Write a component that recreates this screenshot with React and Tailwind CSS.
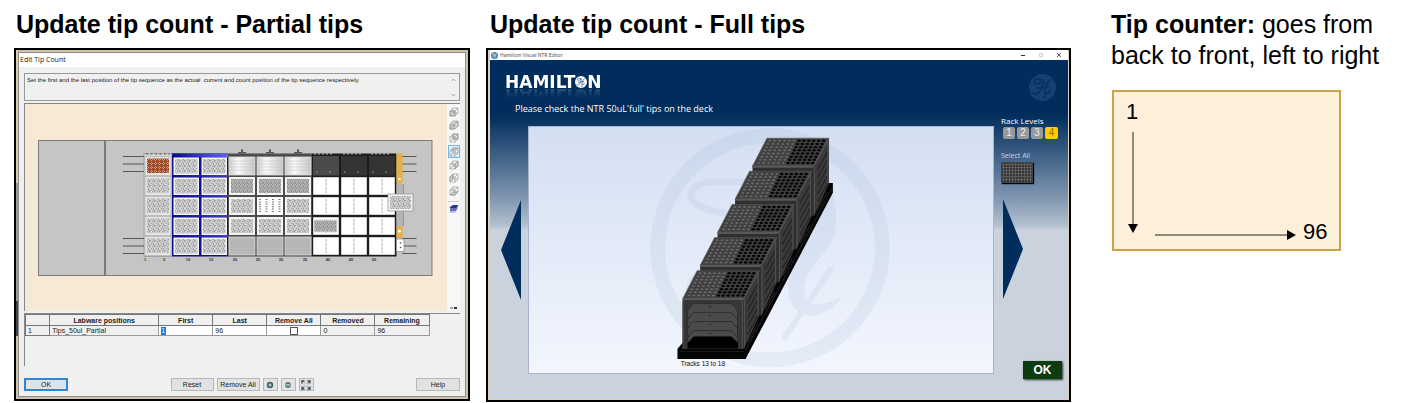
import React from "react";

const COLS = [144, 172, 200, 228, 256, 284, 312, 340, 368];
const ROWS = [156, 176, 196, 216, 236];

function Cell({ c, r }) {
  const x = COLS[c];
  const y = ROWS[r];
  if (c === 0) {
    return (
      <g>
        <rect x={x + 1} y={y + 0.5} width="26" height="19" fill="#e4e4e4" stroke="#aaa" strokeWidth="0.6" />
        <rect x={x + 3} y={y + 2.5} width="22" height="14.5" fill={r === 0 ? "url(#brown)" : "url(#tex)"} />
      </g>
    );
  }
  if (c < 3) {
    return (
      <g>
        <rect x={x + 1.5} y={y + 1.5} width="25.5" height="17.5" fill="#f4f4f4" />
        <rect x={x + 3} y={y + 3} width="22.5" height="14.5" fill="url(#tex)" />
      </g>
    );
  }
  if (c < 6) {
    if (r === 0 || r === 4) {
      return (
        <g>
          <rect x={x + 1} y={y + 1} width="26" height="18" fill={r === 0 ? "url(#shine)" : "#b9b9b9"} stroke="#ddd" strokeWidth="0.8" />
          {[5, 8, 11, 14].map((d) => (
            <path key={d} d={`M${x + 2} ${y + d}h24`} stroke="#999" strokeWidth="0.5" opacity="0.5" />
          ))}
        </g>
      );
    }
    if (r === 2 && c === 4) {
      return (
        <g>
          <rect x={x + 1} y={y + 1} width="26" height="18" fill="#fff" />
          {[4, 10.5, 17, 23.5].map((d) => (
            <path key={d} d={`M${x + d} ${y + 3}v14`} stroke="#777" strokeWidth="2" strokeDasharray="1 1.4" />
          ))}
        </g>
      );
    }
    return (
      <g>
        <rect x={x + 1} y={y + 1} width="26" height="18" fill="#f2f2f2" />
        <rect x={x + 3} y={y + 3} width="22" height="14" fill={r === 1 ? "url(#texDark)" : "url(#tex)"} />
      </g>
    );
  }
  if (r === 0) {
    return (
      <g>
        <rect x={x + 1} y={y} width="26" height="19.5" fill={c === 6 ? "#4a4a4a" : "#343434"} />
        <circle cx={x + 5} cy={y + 16} r="0.7" fill="#aaa" />
        <circle cx={x + 18} cy={y + 16} r="0.7" fill="#aaa" />
      </g>
    );
  }
  return (
    <g>
      <rect x={x + 1.2} y={y + 1.2} width="25.6" height="17.6" fill="#fff" />
      <path d={`M${x + 14} ${y + 3}v14`} stroke="#999" strokeWidth="0.8" strokeDasharray="3 1" />
      {r === 3 && c === 6 && <rect x={x + 2} y={y + 4} width="23" height="12" fill="url(#texDark)" stroke="#ddd" />}
    </g>
  );
}

function Deck() {
  return (
    <svg viewBox="25 104 422 207" className="block h-auto w-full" role="img" aria-label="Deck layout">
      <defs>
        <pattern id="tex" width="5" height="5" patternUnits="userSpaceOnUse">
          <rect width="5" height="5" fill="#c8c8c8" />
          <path d="M0 0h1v1H0zM2 1h1v1H2zM4 0h1v2H4zM1 3h1v1H1zM3 3h1v2H3z" fill="#a2a2a2" />
          <path d="M1 1h1v1H1zM0 4h1v1H0zM4 3h1v1H4z" fill="#dedede" />
        </pattern>
        <pattern id="texDark" width="4" height="4" patternUnits="userSpaceOnUse">
          <rect width="4" height="4" fill="#b0b0b0" />
          <path d="M0 0h1v1H0zM2 1h1v1H2zM1 3h1v1H1zM3 2h1v2H3z" fill="#929292" />
        </pattern>
        <pattern id="brown" width="4" height="4" patternUnits="userSpaceOnUse">
          <rect width="4" height="4" fill="#a04c28" />
          <path d="M0 3h1v1H0zM3 0h1v1H3zM2 3h1v1H2zM3 2h1v1H3z" fill="#cc9880" />
        </pattern>
        <linearGradient id="shine" x1="0" x2="1">
          <stop offset="0" stopColor="#cfcfcf" />
          <stop offset="0.35" stopColor="#f8f8f8" />
          <stop offset="1" stopColor="#c8c8c8" />
        </linearGradient>
        <linearGradient id="blue" x1="0" x2="1">
          <stop offset="0" stopColor="#0c0c84" />
          <stop offset="1" stopColor="#6464f0" />
        </linearGradient>
      </defs>
      <rect x="25" y="104" width="422" height="207" fill="#f6ead7" />
      <rect x="38.5" y="140.5" width="393.5" height="135" fill="#c5c5c5" stroke="#7c7c7c" />
      <path d="M105 141v134" stroke="#666" strokeWidth="1.6" />
      <path
        d="M123 156.5h21M123 164h21M123 171.5h21M123 238.500h21M123 246h21M123 253.500h21M402 156.500h14.500M402 164h14.500M402 171.500h14.500M402 238.500h14.500M402 246h14.500M402 253.500h14.500"
        stroke="#555"
        strokeWidth="1.1"
      />
      <rect x="144" y="153.500" width="28" height="103" fill="#d6d6d6" stroke="#888" strokeWidth="0.6" />
      <path d="M146 154h24" stroke="#555" strokeDasharray="2 2.500" />
      <rect x="172" y="153.500" width="56" height="103" fill="#12128e" />
      <rect x="172" y="153.500" width="56" height="4" fill="url(#blue)" />
      {[176, 196, 216, 236].map((y) => (
        <rect key={y} x="174" y={y - 0.8} width="54" height="1.500" fill="url(#blue)" opacity="0.7" />
      ))}
      <rect x="228" y="153.500" width="84" height="103" fill="#4c4c4c" />
      <rect x="312" y="153.500" width="84.500" height="103" fill="#1c1c1c" />
      {[242, 270, 298].map((x) => (
        <path key={x} d={`M${x - 4} 153.500v-1.500h3v-2.500h2v2.500h3v1.500z`} fill="#555" />
      ))}
      <path d="M314 154h19M343 154h19M371 154h19" stroke="#bbb" strokeWidth="1.200" strokeDasharray="2 2" />
      {COLS.map((x, c) => ROWS.map((y, r) => <Cell key={`${x}-${y}`} c={c} r={r} />))}
      <path d="M396.500 153.500h6v28l-2 2.500-4-1zM396.500 226h6v12h-6z" fill="#e6b044" />
      <circle cx="399.500" cy="179" r="1.200" fill="#fff" />
      <circle cx="399.500" cy="231" r="1.500" fill="#fff" />
      <path d="M396.500 184h6v42h-6" fill="#b4b4b4" />
      <path d="M403.300 184v42" stroke="#8c8c8c" />
      <rect x="396.500" y="239" width="7.500" height="12.500" fill="#fff" stroke="#888" strokeWidth="0.7" />
      <circle cx="400.500" cy="243" r="0.8" fill="#444" />
      <circle cx="400.500" cy="247.500" r="0.8" fill="#444" />
      <rect x="388" y="194" width="25" height="17" fill="#f2f2f2" stroke="#999" strokeWidth="0.8" />
      <rect x="390" y="196" width="21" height="13" fill="url(#tex)" />
      {[["1", 145], ["5", 164], ["10", 188], ["15", 211], ["20", 235], ["25", 258], ["30", 281], ["35", 305], ["40", 328], ["45", 351], ["50", 374]].map(([t, x]) => (
        <text key={t} x={x} y="260.500" fontSize="4" fontWeight="700" fill="#333" textAnchor="middle" fontFamily="Liberation Sans, sans-serif">
          {t}
        </text>
      ))}
    </svg>
  );
}

function ViewIcon({ n }) {
  const faces = ["M1 4h5v5H1z", "M1 5h4v4H1zM5 2h4v4", "M4 1h5v5H4z", "M2 2.500h5M4 1h5", "M6 4l3-3v5L6 9z", "M1 4l3-3v5L1 9z", "M1 9l3-3h5L6 9z"];
  return (
    <svg viewBox="0 0 10 10" className="size-[10px]" fill="none" stroke="#999" strokeWidth="0.7">
      <path d={faces[n]} fill="#dcdcdc" />
      <path d="M1 4h5v5H1zM4 1h5v5H4zM1 4l3-3M6 4l3-3M6 9l3-3M1 9l3-3" />
    </svg>
  );
}

const VIEWS = ["Front", "Back", "Side", "Top", "Right", "Left", "Bottom"];

const smallButton = "flex h-[13px] items-center justify-center border border-[#b8b8b8] bg-[#e2e2e2] text-[7px] leading-[8px]";
const headCell = "border border-[#777] p-0 text-center font-bold";
const cell = "border border-[#999] px-[2px] py-0 text-left font-normal";

function PartialDialog() {
  return (
    <div className="border-2 border-black bg-[#cfc4ad] bg-[linear-gradient(#d8ccb0_0,#d8ccb0_38%,#999_38%,#999_72%,#444_72%,#444_82%,#cfc4ad_82%)] bg-[length:2px_100%] bg-no-repeat p-[2px]">
      <div className="border border-[#8c8c8c] bg-[#f0f0f0] font-['Liberation_Sans',Arial,sans-serif] text-[#222]">
        <div className="h-[14px] bg-white px-px font-['Open_Sans',sans-serif] text-[7px] leading-[13px]">Edit Tip Count</div>
        <div className="px-[5px] pt-[6px] pb-[5px]">
          <div className="flex h-7 border border-[#999] pr-px">
            <textarea
              readOnly
              aria-label="Instruction"
              className="block h-full flex-1 resize-none overflow-hidden px-[2px] text-[6px] leading-[12px] outline-none"
              defaultValue="Set the first and the last position of the tip sequence as the actual  current and count position of the tip sequence respectively."
            />
            <svg viewBox="0 0 9 26" className="h-[26px] w-[9px]" fill="none" stroke="#aaa">
              <path d="M2.500 7l2-2 2 2M2.500 20l2 2 2-2" />
            </svg>
          </div>
          <div className="mt-[2px] flex border-t border-l border-[#888]">
            <div className="min-w-0 flex-1">
              <Deck />
            </div>
            <div className="flex w-[13px] flex-col items-center bg-[#f7f7f7] pt-[2px]">
              {VIEWS.map((v, i) => (
                <button
                  key={v}
                  type="button"
                  aria-label={v}
                  className={
                    i === 3
                      ? "mb-px flex h-[13px] w-[12px] items-center justify-center border border-[#7ab4e4] bg-[#e4f1fb]"
                      : "mb-px flex h-[12px] w-[12px] items-center justify-center"
                  }
                >
                  <ViewIcon n={i} />
                </button>
              ))}
              <span className="mt-[3px] h-px w-[11px] bg-[#ccc]" />
              <button type="button" aria-label="Layers" className="mt-[2px]">
                <svg viewBox="0 0 10 10" className="size-[10px]">
                  <path d="M1 6l3-2h5l-3 5H1z" fill="#b9bede" />
                  <path d="M1 4.500l3-2h5L7 7H1z" fill="#6470b8" />
                  <path d="M1 3l3-2h5.500L7 4H1z" fill="#27338f" />
                </svg>
              </button>
              <svg viewBox="0 0 8 4" className="mt-auto mb-px h-1 w-2">
                <path d="M0 1h3v2H0z" fill="#aaa" />
                <path d="M4 1h3v2H4z" fill="#333" />
              </svg>
            </div>
          </div>
          <div className="mt-[2px] h-[53px] border-t border-l border-[#888]">
            <table className="w-[93%] table-fixed border-collapse bg-white text-[7px] leading-[9px]">
              <colgroup>
                <col className="w-[6%]" />
                <col className="w-[27%]" />
                <col />
                <col />
                <col />
                <col />
                <col />
              </colgroup>
              <thead className="bg-[#f0f0f0]">
                <tr className="h-[11px]">
                  <th className={headCell} />
                  {["Labware positions", "First", "Last", "Remove All", "Removed", "Remaining"].map((h) => (
                    <th key={h} className={headCell}>
                      {h}
                    </th>
                  ))}
                </tr>
              </thead>
              <tbody>
                <tr className="h-[10px]">
                  <th className="border border-[#777] bg-[#f0f0f0] px-[2px] py-0 text-left font-normal">1</th>
                  <td className="border border-[#999] bg-[#f0f0f0] px-[2px] py-0">Tips_50ul_Partial</td>
                  <td className={cell}>
                    <input aria-label="First" defaultValue="1" className="block h-[8px] w-[5px] bg-[#1a78d8] text-[7px] leading-[8px] text-white outline-none" />
                  </td>
                  <td className={cell}>96</td>
                  <td className={cell}>
                    <input type="checkbox" aria-label="Remove All" className="mx-auto block size-[8px] appearance-none border border-[#555] bg-white" />
                  </td>
                  <td className="border border-[#999] bg-[#f0f0f0] px-[2px] py-0">0</td>
                  <td className="border border-[#999] bg-[#f0f0f0] px-[2px] py-0">96</td>
                </tr>
              </tbody>
            </table>
          </div>
          <div className="mt-3 flex justify-between">
            <button type="button" className="flex h-[13px] w-[44px] items-center justify-center border-2 border-[#2f86d6] bg-[#e2e2e2] text-[7px] leading-[8px]">
              OK
            </button>
            <div className="flex gap-[3px]">
              <button type="button" className={smallButton + " w-[43px]"}>
                Reset
              </button>
              <button type="button" className={smallButton + " w-[43px]"}>
                Remove All
              </button>
              <button type="button" aria-label="Zoom in" className={smallButton + " w-[15px]"}>
                <svg viewBox="0 0 8 8" className="size-2">
                  <circle cx="4" cy="4" r="3.200" fill="#47606e" />
                  <path d="M2.500 4h3M4 2.500v3" stroke="#dfeaf0" />
                </svg>
              </button>
              <button type="button" aria-label="Zoom out" className={smallButton + " w-[15px]"}>
                <svg viewBox="0 0 8 8" className="size-2">
                  <circle cx="4" cy="4" r="3" fill="#5d7480" />
                  <path d="M1.500 4h5" stroke="#e8f0f4" />
                </svg>
              </button>
              <button type="button" aria-label="Fit to view" className={smallButton + " w-[15px]"}>
                <svg viewBox="0 0 10 10" className="size-[10px]" fill="none" stroke="#33444e" strokeWidth="1.300">
                  <path d="M1 3.500V1h2.500M6.500 1H9v2.500M9 6.500V9H6.500M3.500 9H1V6.500" />
                  <path d="M1.500 8.500L3.500 6.500M6.500 3.500l2-2M6.500 6.500l2 2" strokeWidth="0.9" />
                  <path d="M3 3h4v4H3z" stroke="#9fb4c0" strokeWidth="0.6" />
                </svg>
              </button>
            </div>
            <button type="button" className={smallButton + " w-[44px]"}>
              Help
            </button>
          </div>
        </div>
      </div>
    </div>
  );
}

function Holes() {
  const out = [];
  for (let r = 0; r < 8; r++) {
    for (let c = 0; c < 12; c++) {
      const v = (r + 0.5) / 8;
      const x = 698.5 - v * 12.5 + ((c + 0.5) / 12) * 59;
      const y = 272 + v * 25.5;
      out.push(
        <ellipse key={`${r}-${c}`} cx={x} cy={y} rx="1.8" ry="1.250" fill={c < 6 ? "#6c6c6c" : "#060606"} stroke={c < 6 ? "#2a2a2a" : "none"} strokeWidth="0.4" />
      );
    }
  }
  return out;
}

function Rack({ i }) {
  return (
    <g transform={`translate(${i * 17.5} ${i * -33.2})`}>
      <path d="M683 299h61l15.500-28v45.500L744 349h-61z" fill="#2f2f2f" />
      <path d="M744 299l15.500-28v45.500L744 350z" fill="#3a3a3a" />
      <path d="M748 303l10-18M748 311l10-18M748 319l10-18M748 327l10-18M748 335l10-18M748 343l10-18" stroke="#242424" strokeWidth="1.200" />
      <path d="M744 299l15.500-28" stroke="#666" strokeWidth="1.200" />
      <path d="M697.500 271h62L744 299h-61z" fill="#424242" stroke="#585858" strokeWidth="0.6" />
      <Holes />
      <path d="M683 299.500h61" stroke="#585858" strokeWidth="2.200" />
      <path d="M745 300v48M758.500 274v42" stroke="#555" strokeWidth="0.9" />
    </g>
  );
}

function RackView() {
  return (
    <svg viewBox="529 127 465 247" className="block h-auto w-full" role="img" aria-label="Tip racks on tracks 13 to 18">
      <defs>
        <linearGradient id="sky" x1="0" x2="0" y1="0" y2="1">
          <stop offset="0" stopColor="#d3dff2" />
          <stop offset="1" stopColor="#f3f6fe" />
        </linearGradient>
      </defs>
      <rect x="529" y="127" width="465" height="247" fill="url(#sky)" />
      <g fill="none" stroke="#90accb" opacity="0.13">
        <circle cx="770.500" cy="248" r="112.500" strokeWidth="15" />
        <path d="M760 182h-44c-20 0-30 10-22 20 10 11 40 12 58 14" strokeWidth="7" />
        <path d="M720 274c-20-2-30 4-30 16" strokeWidth="7" />
        <path d="M831 270L785 338" strokeWidth="6" strokeLinecap="round" />
        <path
          d="M826 178c14 28 15 54 1 72-10 13-22 24-22 40 0 10 4 15 10 15 10 0 20-4 28-9-8 14-24 22-36 20-14-3-20-18-18-36 3-24 20-38 28-54 6-14 10-30 9-48z"
          fill="#90accb"
          stroke="none"
        />
      </g>
      <path d="M678 349L825 183h8.500v10L746 359.500h-68z" fill="#040404" />
      <path d="M746 351l87-163" stroke="#2c2c2c" strokeWidth="0.8" />
      {[4, 3, 2, 1, 0].map((i) => (
        <Rack key={i} i={i} />
      ))}
      <path d="M683 301h61v49h-61z" fill="#363636" />
      {[0, 1, 2, 3].map((k) => (
        <g key={k}>
          <path d={`M688 ${311 + k * 9}l5.500-7h38.500l6 7v7.500h-50z`} fill="#4a4a4a" stroke="#262626" strokeWidth="0.7" />
          <circle cx="710.500" cy={307 + k * 9} r="0.8" fill="#1a1a1a" />
        </g>
      ))}
      <path d="M688 343.500l6-6.500h38l6.500 6.500v5.500H688z" fill="#000" />
      <path d="M683.500 301v48M743 301v48" stroke="#505050" />
      <path d="M678 349.500h68v10h-68z" fill="#050505" />
      <path d="M680 352h65" stroke="#262626" strokeWidth="0.700" />
      <text x="681" y="367" fontSize="6.5" fill="#111" fontFamily="Liberation Sans, Arial, sans-serif">
        Tracks 13 to 18
      </text>
    </svg>
  );
}

function ScriptMark({ className, disc, ink }) {
  return (
    <svg viewBox="0 0 26 26" className={className} aria-hidden="true">
      <circle cx="13" cy="13" r="13" fill={disc} />
      <path
        d="M4 18.500c2.500 2 5.500.5 7-3l3.500-8.500M13 5.500C8 4 4.500 5.500 5 8s4.500 1.500 7-.5M21.500 5c-3 .5-4 4-5.500 8-1.300 3.500-1.500 6.500.8 6 1.500-.4 2.700-1.800 3.200-3M7 13.500c4.500 0 8-.5 12-1.500M15.500 19l-1 4"
        fill="none"
        stroke={ink}
        strokeWidth="1.500"
        strokeLinecap="round"
      />
    </svg>
  );
}

function FullDialog() {
  return (
    <div className="flex flex-col border-2 border-black bg-[#ddd2b8] pr-px pb-px pl-[2px]">
      <div className="flex h-[10px] items-center bg-white pl-px font-['Open_Sans',sans-serif] text-[5px] leading-[10px] text-[#444]">
        <ScriptMark className="mr-[2px] size-[7px]" disc="#4479ad" ink="#fff" />
        <span className="flex-1">Hamilton Visual NTR Editor</span>
        <div className="flex gap-[10px] pr-[5px]">
          <button type="button" aria-label="Minimize">
            <svg viewBox="0 0 8 8" className="block size-2" stroke="#333">
              <path d="M2 4.500h4" />
            </svg>
          </button>
          <button type="button" aria-label="Maximize">
            <svg viewBox="0 0 8 8" className="block size-2" stroke="#ccc" fill="none">
              <path d="M2.500 2.500h3v3h-3z" />
            </svg>
          </button>
          <button type="button" aria-label="Close">
            <svg viewBox="0 0 8 8" className="block size-2" stroke="#333" strokeWidth="0.8">
              <path d="M2 2l4 4M6 2L2 6" />
            </svg>
          </button>
        </div>
      </div>
      <div className="flex flex-1 bg-[linear-gradient(#002d5c_0,#002d5c_55px,#8499b3_140px,#b4c2d0_166px,#cad3dd_170px)] font-['Open_Sans',sans-serif] text-white">
        <div className="min-w-0 flex-1">
          <div className="h-[66px] pt-[14px] pl-[15px]">
            <div className="flex h-4 w-fit items-center font-['DejaVu_Sans',sans-serif] text-[17px] leading-[16px] font-bold [-webkit-box-reflect:below_-3px_linear-gradient(transparent_30%,rgba(255,255,255,0.2))]">
              HAMILT
              <ScriptMark className="size-3" disc="#fff" ink="#23507f" />N
            </div>
            <p className="mt-3 pl-[10px] text-[9px] leading-[14px]">Please check the NTR 50uL'full' tips on the deck</p>
          </div>
          <div className="flex items-center pb-[25px]">
            <div className="w-[38px] pl-[11px]">
              <button type="button" aria-label="Previous" className="block">
                <svg viewBox="0 0 20 100" className="block h-[100px] w-5">
                  <path d="M20 0v100L0 50z" fill="#002d5c" />
                </svg>
              </button>
            </div>
            <div className="min-w-0 flex-1 border border-[#a9b3cf]">
              <RackView />
            </div>
          </div>
        </div>
        <div className="flex w-[74px] flex-col pt-[14px] pb-5 pl-[7px]">
          <ScriptMark className="mr-3 size-[27px] self-end" disc="#154073" ink="#0a2f5e" />
          <p className="mt-[14px] text-[8px] leading-[12px]">Rack Levels</p>
          <div className="flex gap-[2px] pl-[2px] font-['Liberation_Sans',Arial,sans-serif] text-[10px] leading-[12px]">
            {["1", "2", "3"].map((n) => (
              <button key={n} type="button" className="h-[12px] w-[12px] rounded-[2px] bg-[#999] text-center text-[#eee]">
                {n}
              </button>
            ))}
            <button type="button" className="h-[12px] w-[13px] rounded-[2px] bg-[#ffcc00] text-center text-[#8a7020]">
              4
            </button>
          </div>
          <p className="mt-[11px] text-[7px] leading-[12px] text-[#c8d4e0]">Select All</p>
          <button type="button" aria-label="Select All" className="w-8 shadow-[1px_1px_1px_#000]">
            <svg viewBox="0 0 32 21" className="block h-[21px] w-8">
              <defs>
                <pattern id="wells" width="3" height="3" patternUnits="userSpaceOnUse">
                  <rect width="3" height="3" fill="#5e5e5e" />
                  <path d="M0 0h2v2H0z" fill="#333" />
                </pattern>
              </defs>
              <rect width="32" height="21" fill="#444" />
              <rect x="1" y="1" width="30" height="19" fill="url(#wells)" />
            </svg>
          </button>
          <button type="button" aria-label="Next" className="mt-4 w-fit pl-[2px]">
            <svg viewBox="0 0 20 100" className="block h-[100px] w-5">
              <path d="M0 0v100L20 50z" fill="#002d5c" />
            </svg>
          </button>
          <button
            type="button"
            className="mt-auto mr-[6px] h-[18px] w-[39px] self-end bg-[#0e3b12] font-['Liberation_Sans',Arial,sans-serif] text-[12px] leading-[18px] font-bold shadow-[1px_1px_2px_#333]"
          >
            OK
          </button>
        </div>
      </div>
    </div>
  );
}

const heading = "h-12 pt-[9px] text-[25px] leading-[31px] font-bold whitespace-nowrap";

export default function App() {
  return (
    <main className="grid grid-cols-[456fr_585fr_331fr] gap-x-4 bg-white pl-[14px] font-['Liberation_Sans',Arial,sans-serif] text-black">
      <section className="flex min-w-0 flex-col">
        <h2 className={heading + " pl-[2px]"}>Update tip count - Partial tips</h2>
        <PartialDialog />
      </section>
      <section className="flex min-w-0 flex-col">
        <h2 className={heading + " pl-1"}>Update tip count - Full tips</h2>
        <FullDialog />
      </section>
      <section className="min-w-0 pt-[9px] pl-6">
        <p className="text-[25px] leading-[31px]">
          <b>Tip counter:</b> goes from
          <br />
          back to front, left to right
        </p>
        <div className="mt-[19px] ml-px flex h-[161px] w-full max-w-[229px] gap-[14px] border-2 border-[#c9a24c] bg-[#fdf0db] pr-3 pl-[12px] text-[22px]">
          <div className="flex flex-col pt-2">
            <span className="leading-6">1</span>
            <svg viewBox="0 0 14 102" className="mt-[8px] h-[102px] w-[14px]">
              <path d="M7 0v94" stroke="#222" />
              <path d="M2 92h10l-5 9z" />
            </svg>
          </div>
          <div className="flex flex-1 items-center self-end pb-[5px]">
            <svg viewBox="0 0 141 10" className="mt-[6px] mr-[7px] ml-[1px] h-[10px] w-[141px]">
              <path d="M0 5h134" stroke="#222" />
              <path d="M132 0v10l9-5z" />
            </svg>
            <span className="leading-6">96</span>
          </div>
        </div>
      </section>
    </main>
  );
}
